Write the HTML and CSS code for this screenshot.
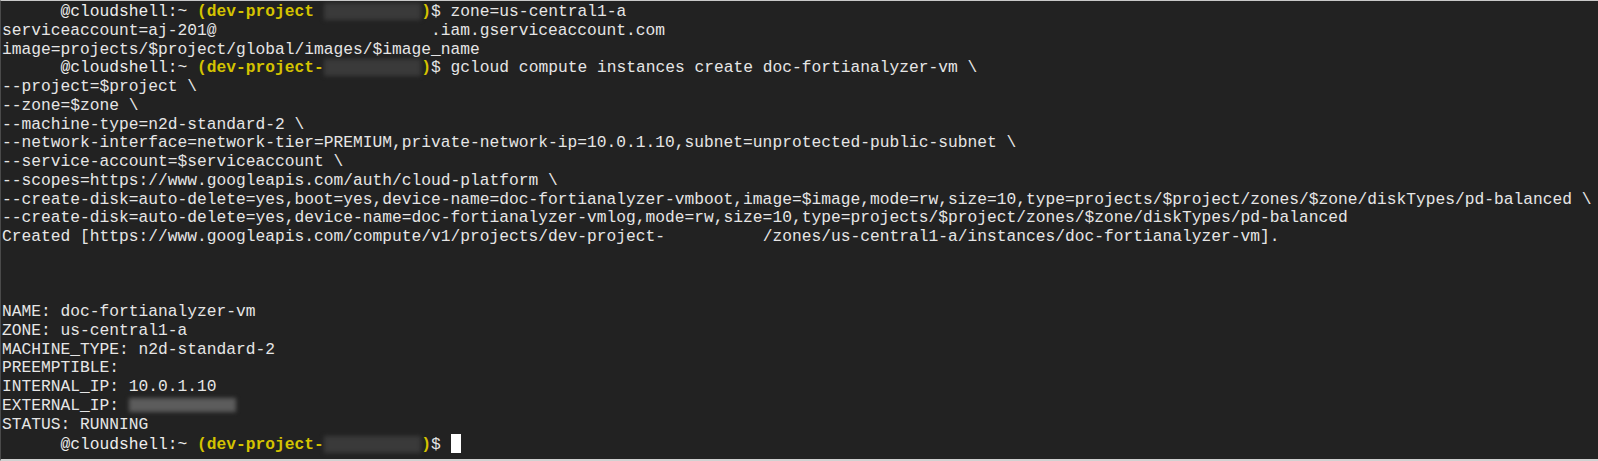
FILE: index.html
```html
<!DOCTYPE html>
<html lang="en">
<head>
<meta charset="utf-8">
<title>Cloud Shell</title>
<link rel="stylesheet" href="styles.css">
</head>
<body>
<main class="terminal">
<div class="line"><span class="indent">      </span><span class="host">@cloudshell:~ </span><span class="proj">(dev-project </span><span class="redact"></span><span class="proj">)</span><span>$ zone=us-central1-a</span></div>
<div class="line"><span>serviceaccount=aj-201@</span><span class="gap22"></span><span>.iam.gserviceaccount.com</span></div>
<div class="line">image=projects/$project/global/images/$image_name</div>
<div class="line"><span class="indent">      </span><span class="host">@cloudshell:~ </span><span class="proj">(dev-project-</span><span class="redact"></span><span class="proj">)</span><span>$ gcloud compute instances create doc-fortianalyzer-vm \</span></div>
<div class="line">--project=$project \</div>
<div class="line">--zone=$zone \</div>
<div class="line">--machine-type=n2d-standard-2 \</div>
<div class="line">--network-interface=network-tier=PREMIUM,private-network-ip=10.0.1.10,subnet=unprotected-public-subnet \</div>
<div class="line">--service-account=$serviceaccount \</div>
<div class="line">--scopes=https://www.googleapis.com/auth/cloud-platform \</div>
<div class="line">--create-disk=auto-delete=yes,boot=yes,device-name=doc-fortianalyzer-vmboot,image=$image,mode=rw,size=10,type=projects/$project/zones/$zone/diskTypes/pd-balanced \</div>
<div class="line">--create-disk=auto-delete=yes,device-name=doc-fortianalyzer-vmlog,mode=rw,size=10,type=projects/$project/zones/$zone/diskTypes/pd-balanced</div>
<div class="line"><span>Created [https://www.googleapis.com/compute/v1/projects/dev-project-</span><span class="gap10"></span><span>/zones/us-central1-a/instances/doc-fortianalyzer-vm].</span></div>
<div class="line"></div>
<div class="line"></div>
<div class="line"></div>
<div class="line">NAME: doc-fortianalyzer-vm</div>
<div class="line">ZONE: us-central1-a</div>
<div class="line">MACHINE_TYPE: n2d-standard-2</div>
<div class="line">PREEMPTIBLE:</div>
<div class="line">INTERNAL_IP: 10.0.1.10</div>
<div class="line"><span>EXTERNAL_IP: </span><span class="redact redact-ip"></span></div>
<div class="line">STATUS: RUNNING</div>
<div class="line"><span class="indent">      </span><span class="host">@cloudshell:~ </span><span class="proj">(dev-project-</span><span class="redact"></span><span class="proj">)</span><span>$ </span><span class="cursor"></span></div>
</main>
</body>
</html>
```
FILE: styles.css
```css
html, body {
  margin: 0;
  padding: 0;
  background: #222222;
}

.terminal {
  box-sizing: border-box;
  width: 100%;
  height: 461px;
  background: #222222;
  border-top: 1px solid #c9c9c9;
  border-bottom: 2px solid #d2d2d2;
  border-left: 1px solid #4a4a4a;
  padding: 2px 0 0 1px;
  overflow: hidden;
  font-family: "Liberation Mono", "DejaVu Sans Mono", monospace;
  font-size: 16.25px;
  line-height: 18.75px;
  color: #e6e6e6;
}

.line {
  height: 18.75px;
  white-space: pre;
}

.host {
  color: #ededed;
}

.proj {
  color: #d4c300;
  font-weight: bold;
}

.gap22 {
  display: inline-block;
  width: 22ch;
}

.gap10 {
  display: inline-block;
  width: 10ch;
}

.redact {
  display: inline-block;
  width: 10ch;
  height: 17px;
  vertical-align: -4px;
  background: #3a3a3a;
  filter: blur(2px);
}

.redact-ip {
  width: 11ch;
  height: 14px;
  vertical-align: -2px;
  background: #5c5c5c;
}

.cursor {
  display: inline-block;
  width: 10px;
  height: 19px;
  vertical-align: -4px;
  background: #ffffff;
}
```
